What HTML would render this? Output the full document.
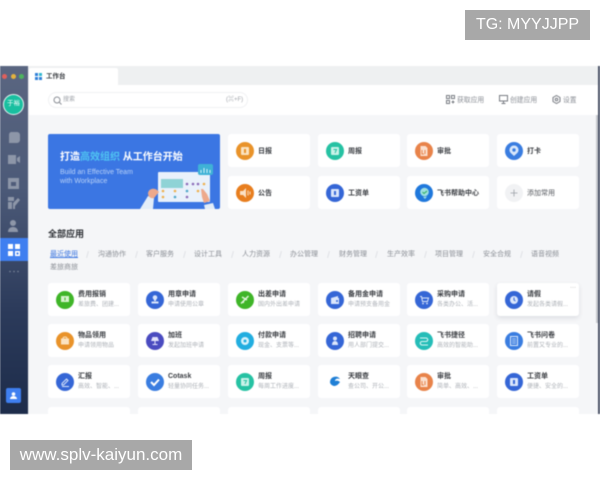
<!DOCTYPE html>
<html><head><meta charset="utf-8"><style>
*{box-sizing:border-box;margin:0;padding:0}
html,body{width:600px;height:480px;background:#fff;overflow:hidden;font-family:"Liberation Sans","Noto Sans CJK SC",sans-serif}
.a{position:absolute}
#win{position:absolute;left:0;top:66px;width:600px;height:348px;overflow:hidden;background:#f5f6f8;filter:blur(.45px)}
#side{position:absolute;left:0;top:0;width:28px;height:348px;background:linear-gradient(#5a6681 0%,#4c5a78 35%,#2c3b5b 70%,#1d2c4a 100%)}
.card{position:absolute;width:82px;height:33px;background:#fff;border-radius:3px}
.ic{position:absolute;left:8px;top:7.5px;width:18px;height:18px;border-radius:50%}
.ic svg{position:absolute;left:0;top:0;width:18px;height:18px}
.t{position:absolute;left:30px;top:5.5px;font-size:7px;line-height:11px;color:#3a3d42;font-weight:700;white-space:nowrap}
.s{position:absolute;left:30px;top:16.5px;font-size:6px;line-height:10px;color:#adb1b7;white-space:nowrap}
.h{position:absolute;left:30px;top:11.5px;font-size:7px;line-height:11px;color:#3a3d42;font-weight:700;white-space:nowrap}
.tab{position:absolute;top:183px;font-size:7px;line-height:11px;color:#8a8e95;white-space:nowrap}
.sl{position:absolute;top:185px;width:1px;height:7px;background:#dfe1e5;transform:rotate(15deg)}
.act{position:absolute;top:86px;font-size:6.8px;line-height:11px;color:#8a8e95;white-space:nowrap}
</style></head><body>
<div class="a" style="left:465px;top:10px;width:125px;height:30px;background:#a8a8a8;color:#fff;font-size:16px;line-height:30px;text-align:center">TG: MYYJJPP</div>

<div id="win">
<div id="side">
<div class="a" style="left:2px;top:8px;width:5px;height:5px;border-radius:50%;background:#e0605c"></div>
<div class="a" style="left:10.500px;top:8px;width:5px;height:5px;border-radius:50%;background:#e4b23e"></div>
<div class="a" style="left:19px;top:8px;width:5px;height:5px;border-radius:50%;background:#4db45e"></div>
<div class="a" style="left:3px;top:28px;width:21px;height:21px;border-radius:50%;background:#19bfa0;border:1.5px solid #e6f5f2;color:#fff;font-size:6.5px;line-height:18px;text-align:center">于裕</div>
<svg class="a" style="left:8px;top:65px" width="14" height="104" viewBox="0 0 14 104" fill="#8d96a8">
<path d="M3 1h6a3 3 0 0 1 3 3v5a3 3 0 0 1-3 3H1V4a3 3 0 0 1 2-3z"/>
<path d="M0 24h8v9H0zM9 27l3-2v7l-3-2z"/>
<path d="M0 47h11v11H0z"/><path d="M3 51h5v4H3z" fill="#4f5c79"/>
<path d="M0 66h6v4H0zM0 71h4v7H0zM5 72l5-5 2 2-5 6v3H5z"/>
<circle cx="5" cy="92" r="3"/><path d="M0 101c0-4 3-5 5-5s5 1 5 5z"/>
</svg>
<div class="a" style="left:0;top:172px;width:28px;height:23px;background:#3f7ff0"></div>
<svg class="a" style="left:8px;top:178px" width="12" height="12" fill="#fff"><rect x="0" y="0" width="5" height="5"/><rect x="7" y="0" width="5" height="5"/><rect x="0" y="7" width="5" height="5"/><rect x="7" y="7" width="5" height="5"/><rect x="8.5" y="8.500" width="2" height="2" fill="#3f7ff0"/></svg>
<svg class="a" style="left:9px;top:204px" width="10" height="3" fill="#7c869a"><circle cx="1" cy="1.500" r=".8"/><circle cx="5" cy="1.500" r=".8"/><circle cx="9" cy="1.500" r=".8"/></svg>
<div class="a" style="left:6px;top:322px;width:15px;height:15px;border-radius:2px;background:#3f7ff0"></div>
<svg class="a" style="left:10px;top:326px" width="7" height="7" fill="#fff"><circle cx="3.500" cy="2" r="1.800"/><path d="M0 7c0-2 2-3 3.500-3S7 5 7 7z"/></svg>
</div>

<div class="a" style="left:28px;top:0;width:1px;height:348px;background:#e8eaed"></div>
<div class="a" style="left:29px;top:0;width:569px;height:19px;background:#eef0f1"></div>
<div class="a" style="left:29px;top:2px;width:89px;height:17px;background:#fff;border-radius:2px 2px 0 0"></div>
<svg class="a" style="left:35px;top:7px" width="7" height="7"><rect width="3" height="3" fill="#2f7fd8"/><rect x="4" width="3" height="3" fill="#32b7d0"/><rect y="4" width="3" height="3" fill="#2f7fd8"/><rect x="4" y="4" width="3" height="3" fill="#2f7fd8"/></svg>
<div class="a" style="left:46px;top:5px;font-size:6.500px;line-height:11px;color:#33363b;font-weight:700">工作台</div>

<div class="a" style="left:29px;top:19px;width:569px;height:30px;background:#fff"></div>
<div class="a" style="left:48px;top:26px;width:200px;height:16px;border-radius:8px;background:#fff;border:1px solid #f0f1f3"></div>
<svg class="a" style="left:53px;top:30px" width="9" height="9" fill="none" stroke="#8a8e95" stroke-width="1"><circle cx="4" cy="4" r="3"/><path d="M6.200 6.200L8.500 8.500"/></svg>
<div class="a" style="left:63px;top:29px;font-size:6px;line-height:11px;color:#a0a4aa">搜索</div>
<div class="a" style="left:226px;top:29px;font-size:6px;line-height:11px;color:#a0a4aa">(⌘+F)</div>

<svg class="a" style="left:446px;top:29px" width="9" height="9" fill="none" stroke="#777b82" stroke-width="1"><rect x=".5" y=".5" width="3" height="3"/><rect x="5.500" y=".5" width="3" height="3"/><rect x=".5" y="5.500" width="3" height="3"/><path d="M5.500 7h3M7 5.500v3"/></svg>
<div class="act" style="left:457px;top:28.500px">获取应用</div>
<svg class="a" style="left:499px;top:29px" width="9" height="9" fill="none" stroke="#777b82" stroke-width="1"><rect x=".5" y=".5" width="8" height="5.500"/><path d="M4.500 6v2.500M2.500 8.500h4"/></svg>
<div class="act" style="left:510px;top:28.500px">创建应用</div>
<svg class="a" style="left:552px;top:29px" width="9" height="9" fill="none" stroke="#777b82" stroke-width="1"><path d="M4.500.5l3.500 2v4l-3.500 2-3.500-2v-4z"/><circle cx="4.500" cy="4.500" r="1.300"/></svg>
<div class="act" style="left:563px;top:28.500px">设置</div>

<div class="a" style="left:48px;top:68px;width:172px;height:75px;border-radius:2px;background:#3b76e3;overflow:hidden">
<div class="a" style="left:12px;top:17px;font-size:10px;line-height:14px;font-weight:700;color:#fff;white-space:nowrap">打造<span style="color:#4fc4f2">高效组织</span> 从工作台开始</div>
<div class="a" style="left:12px;top:33.500px;font-size:7px;line-height:9.500px;color:#b9d2f8;white-space:nowrap">Build an Effective Team<br>with Workplace</div>
<svg class="a" style="left:90px;top:30px" width="82" height="45">
<rect x="20" y="8" width="52" height="30" rx="1" fill="#e9f1fb"/>
<rect x="23" y="15" width="22" height="9" fill="#8fd3d6"/>
<rect x="60" y="0" width="15" height="11" rx="2" fill="#3fb2d6"/>
<path d="M63 9V6M66 9V4M69 9V5M72 9V6" stroke="#d8f3fa" stroke-width="1"/>
<g fill="#8a6bb8"><circle cx="49" cy="20" r="1.300"/><circle cx="55" cy="20" r="1.300"/><circle cx="60" cy="20" r="1.300"/></g><circle cx="66" cy="20" r="1.300" fill="#eeb04e"/>
<circle cx="25" cy="27" r="1.300" fill="#eeb04e"/><circle cx="37" cy="27" r="1.300" fill="#eeb04e"/><circle cx="37" cy="33" r="1.300" fill="#4ea6c8"/><circle cx="49" cy="27" r="1.300" fill="#4ea6c8"/><circle cx="49" cy="33" r="1.300" fill="#8a6bb8"/><circle cx="60" cy="27" r="1.300" fill="#eeb04e"/><circle cx="25" cy="33" r="1.300" fill="#eeb04e"/>
<path d="M2 45l8-13 6 2-1 11z" fill="#e3edf8"/><path d="M10 29c1-5 7-5 9-3l2 2-5 6c-3 1-6-1-6-5z" fill="#eda98c"/>
<path d="M77 45l-2-6-9 2 1 4z" fill="#e3edf8"/><path d="M63 25l2 0 4 5 3 7-6 2-2-6z" fill="#eda98c"/>
</svg>
</div>

<!-- quick tiles -->
<div class="card" style="left:228px;top:68px"><div class="ic" style="background:#e9932a"><svg viewBox="0 0 18 18"><rect x="5" y="5" width="8" height="8" rx="1" fill="#fbe3c0"/><rect x="8" y="7" width="2" height="4" fill="#e9932a"/></svg></div><div class="h">日报</div></div>
<div class="card" style="left:318px;top:68px"><div class="ic" style="background:#26c2a3"><svg viewBox="0 0 18 18"><rect x="5" y="5" width="8" height="8" rx="1" fill="#c9f2e8"/><path d="M7.500 7.500h3l-1.500 3.500" stroke="#26c2a3" fill="none"/></svg></div><div class="h">周报</div></div>
<div class="card" style="left:407px;top:68px"><div class="ic" style="background:#e8834a"><svg viewBox="0 0 18 18"><path d="M5.500 4h5l2 2v8h-7z" fill="#fbe0cf"/><path d="M7 8v4h2M10 8v4" stroke="#e8834a" fill="none"/></svg></div><div class="h">审批</div></div>
<div class="card" style="left:497px;top:68px"><div class="ic" style="background:#3a7de0"><svg viewBox="0 0 18 18"><path d="M9 3.500a4.500 4.500 0 0 1 3.500 7.300L9 14l-3.500-3.200A4.500 4.500 0 0 1 9 3.500z" fill="#d8e7fb"/><circle cx="9" cy="8" r="1.700" fill="#3a7de0"/></svg></div><div class="h">打卡</div></div>
<div class="card" style="left:228px;top:110px"><div class="ic" style="background:#e87e1e"><svg viewBox="0 0 18 18"><path d="M4 7h3l3-3v10l-3-3H4z" fill="#fbe0c4"/><path d="M12 6.500v5M14 7.500v3" stroke="#fbe0c4"/></svg></div><div class="h">公告</div></div>
<div class="card" style="left:318px;top:110px"><div class="ic" style="background:#3566d6"><svg viewBox="0 0 18 18"><rect x="5" y="5" width="8" height="8" rx="1" fill="#dbe6fb"/><rect x="8" y="7" width="2" height="4" fill="#3566d6"/></svg></div><div class="h">工资单</div></div>
<div class="card" style="left:407px;top:110px"><div class="ic" style="background:#1f78dc"><svg viewBox="0 0 18 18"><circle cx="9.500" cy="8" r="4.300" fill="#9fe0e0"/><path d="M7.500 8l1.500 1.500L12 7" stroke="#3cb46e" stroke-width="1.200" fill="none"/><path d="M8 13l2 2 2-2.500z" fill="#9fe0e0"/></svg></div><div class="h">飞书帮助中心</div></div>
<div class="card" style="left:497px;top:110px"><div class="ic" style="background:#f1f2f4"><svg viewBox="0 0 18 18"><path d="M9 5.500v7M5.500 9h7" stroke="#9a9ea5" stroke-width=".8"/></svg></div><div class="h" style="font-weight:400;color:#55585e">添加常用</div></div>

<div class="a" style="left:48px;top:162px;font-size:9px;line-height:13px;font-weight:700;color:#2b2e33">全部应用</div>
<div class="tab" style="left:50px;color:#3d77e0;text-decoration:underline">最近使用</div><div class="sl" style="left:87px"></div>
<div class="tab" style="left:98px">沟通协作</div><div class="sl" style="left:136px"></div>
<div class="tab" style="left:146px">客户服务</div><div class="sl" style="left:184px"></div>
<div class="tab" style="left:194px">设计工具</div><div class="sl" style="left:232px"></div>
<div class="tab" style="left:242px">人力资源</div><div class="sl" style="left:280px"></div>
<div class="tab" style="left:290px">办公管理</div><div class="sl" style="left:328px"></div>
<div class="tab" style="left:339px">财务管理</div><div class="sl" style="left:376px"></div>
<div class="tab" style="left:387px">生产效率</div><div class="sl" style="left:425px"></div>
<div class="tab" style="left:435px">项目管理</div><div class="sl" style="left:473px"></div>
<div class="tab" style="left:483px">安全合规</div><div class="sl" style="left:521px"></div>
<div class="tab" style="left:531px">语音视频</div>
<div class="tab" style="left:50px;top:196px">差旅商旅</div>

<!-- row 1 -->
<div class="card" style="left:48px;top:217px"><div class="ic" style="background:#3fb528;left:8px"><svg viewBox="0 0 18 18"><rect x="5" y="5" width="8" height="6" fill="#d6f2cd"/><path d="M9 6.500v3" stroke="#3fb528"/></svg></div><div class="t">费用报销</div><div class="s">差旅费、团建...</div></div>
<div class="card" style="left:138px;top:217px"><div class="ic" style="background:#3566d6"><svg viewBox="0 0 18 18"><circle cx="9" cy="6.500" r="2.300" fill="#dbe6fb"/><path d="M8 8h2v2H8zM5.500 10.500h7V12.500h-7z" fill="#dbe6fb"/></svg></div><div class="t">用章申请</div><div class="s">申请使用公章</div></div>
<div class="card" style="left:228px;top:217px"><div class="ic" style="background:#3fb528"><svg viewBox="0 0 18 18"><path d="M12.500 5L5 12.500M6 6l5 3M7 12l1-3" stroke="#e2f6dc" stroke-width="1.500" fill="none"/></svg></div><div class="t">出差申请</div><div class="s">国内外出差申请</div></div>
<div class="card" style="left:318px;top:217px"><div class="ic" style="background:#3566d6"><svg viewBox="0 0 18 18"><path d="M5 7l7-2v2h1v6H5z" fill="#dbe6fb"/><circle cx="11" cy="10" r="1" fill="#3566d6"/></svg></div><div class="t">备用金申请</div><div class="s">申请预支备用金</div></div>
<div class="card" style="left:407px;top:217px"><div class="ic" style="background:#3566d6"><svg viewBox="0 0 18 18"><path d="M5 5.500h1.500l1 5h5l1-3.500H7" stroke="#dbe6fb" fill="none"/><circle cx="8" cy="12.500" r=".9" fill="#dbe6fb"/><circle cx="12" cy="12.500" r=".9" fill="#dbe6fb"/></svg></div><div class="t">采购申请</div><div class="s">各类办公、活...</div></div>
<div class="card" style="left:497px;top:217px;box-shadow:0 2px 5px rgba(40,50,70,.12)"><div class="ic" style="background:#3566d6"><svg viewBox="0 0 18 18"><circle cx="9" cy="9" r="4" fill="#dbe6fb"/><path d="M9 6.500V9l1.500 1" stroke="#3566d6" fill="none"/></svg></div><div class="t">请假</div><div class="s">发起各类请假...</div><div class="a" style="right:3px;top:2px;font-size:6px;line-height:6px;color:#999;letter-spacing:0">···</div></div>
<!-- row 2 -->
<div class="card" style="left:48px;top:258px"><div class="ic" style="background:#e9932a"><svg viewBox="0 0 18 18"><rect x="5" y="6.500" width="8" height="6" fill="#fbe3c0"/><path d="M7 6.500c0-2 4-2 4 0M5 8.500h8" stroke="#fbe3c0" fill="none"/></svg></div><div class="t" style="top:6px">物品领用</div><div class="s">申请领用物品</div></div>
<div class="card" style="left:138px;top:258px"><div class="ic" style="background:#4a4bc0"><svg viewBox="0 0 18 18"><path d="M6.500 5h5l1.500 4H5z" fill="#e2e2fb"/><path d="M8.500 9h1v3h-1zM6.500 12h5v1h-5z" fill="#e2e2fb"/></svg></div><div class="t" style="top:6px">加班</div><div class="s">发起加班申请</div></div>
<div class="card" style="left:228px;top:258px"><div class="ic" style="background:#22aee0"><svg viewBox="0 0 18 18"><circle cx="9" cy="9" r="4" fill="#d8f2fb"/><circle cx="9" cy="9" r="1.500" fill="#22aee0"/></svg></div><div class="t" style="top:6px">付款申请</div><div class="s">现金、支票等...</div></div>
<div class="card" style="left:318px;top:258px"><div class="ic" style="background:#3566d6"><svg viewBox="0 0 18 18"><circle cx="9" cy="6.500" r="2" fill="#dbe6fb"/><path d="M6 13c0-3 1.500-4 3-4s3 1 3 4z" fill="#dbe6fb"/></svg></div><div class="t" style="top:6px">招聘申请</div><div class="s">用人部门提交...</div></div>
<div class="card" style="left:407px;top:258px"><div class="ic" style="background:#25bdb8"><svg viewBox="0 0 18 18"><path d="M5 6h6a1.700 1.700 0 0 1 0 3.500H7a1.700 1.700 0 0 0 0 3.500h6" stroke="#d9f6f4" stroke-width="1.100" fill="none"/></svg></div><div class="t" style="top:6px">飞书捷径</div><div class="s">高效的智能助...</div></div>
<div class="card" style="left:497px;top:258px"><div class="ic" style="background:#3a7de0"><svg viewBox="0 0 18 18"><rect x="5.500" y="4.500" width="7" height="9" fill="none" stroke="#d8e7fb"/><path d="M7 7h4M7 9h4M7 11h4" stroke="#d8e7fb" stroke-width=".7"/></svg></div><div class="t" style="top:6px">飞书问卷</div><div class="s">前置又专业的...</div></div>
<!-- row 3 -->
<div class="card" style="left:48px;top:299px"><div class="ic" style="background:#3566d6"><svg viewBox="0 0 18 18"><path d="M6 10.500L10.500 6l1.500 1.500L7.500 12H6zM6 13.500h7" stroke="#dbe6fb" fill="none"/></svg></div><div class="t" style="top:6px">汇报</div><div class="s">高效、智能、...</div></div>
<div class="card" style="left:138px;top:299px"><div class="ic" style="background:#3a7de0"><svg viewBox="0 0 18 18"><path d="M5 9l3 3 5-5.500" stroke="#fff" stroke-width="2" fill="none"/></svg></div><div class="t" style="top:6px">Cotask</div><div class="s">轻量协同任务...</div></div>
<div class="card" style="left:228px;top:299px"><div class="ic" style="background:#26c2a3"><svg viewBox="0 0 18 18"><rect x="5" y="5" width="8" height="8" rx="1" fill="#c9f2e8"/><path d="M7.500 7.500h3l-1.500 3.500" stroke="#26c2a3" fill="none"/></svg></div><div class="t" style="top:6px">周报</div><div class="s">每周工作进度...</div></div>
<div class="card" style="left:318px;top:299px"><div class="ic" style="background:#fff"><svg viewBox="0 0 18 18"><path d="M4 9a5.500 5.500 0 0 1 10-3c-3-1-5 0-5 2 2-1 4 0 5 1-2 3-4 4-6 4-2-.5-4-2-4-4z" fill="#1f7fd6"/></svg></div><div class="t" style="top:6px">天眼查</div><div class="s">查公司、开公...</div></div>
<div class="card" style="left:407px;top:299px"><div class="ic" style="background:#e8834a"><svg viewBox="0 0 18 18"><path d="M5.500 4h5l2 2v8h-7z" fill="#fbe0cf"/><path d="M7 8v4h2M10 8v4" stroke="#e8834a" fill="none"/></svg></div><div class="t" style="top:6px">审批</div><div class="s">简单、高效、...</div></div>
<div class="card" style="left:497px;top:299px"><div class="ic" style="background:#3566d6"><svg viewBox="0 0 18 18"><rect x="5" y="5" width="8" height="8" rx="1" fill="#dbe6fb"/><rect x="8" y="7" width="2" height="4" fill="#3566d6"/></svg></div><div class="t" style="top:6px">工资单</div><div class="s">便捷、安全的...</div></div>
<!-- row 4 clipped -->
<div class="card" style="left:48px;top:341px"></div><div class="card" style="left:138px;top:341px"></div><div class="card" style="left:228px;top:341px"></div><div class="card" style="left:318px;top:341px"></div><div class="card" style="left:407px;top:341px"></div><div class="card" style="left:497px;top:341px"></div>

<div class="a" style="left:596px;top:49px;width:2px;height:208px;background:#c6c9ce"></div>
<div class="a" style="left:598px;top:0;width:2px;height:348px;background:#4a5266"></div>
</div>

<div class="a" style="left:10px;top:440px;width:182px;height:30px;background:#a8a8a8;color:#fff;font-size:17px;line-height:30px;text-align:center;white-space:nowrap">www.splv-kaiyun.com</div>
</body></html>
